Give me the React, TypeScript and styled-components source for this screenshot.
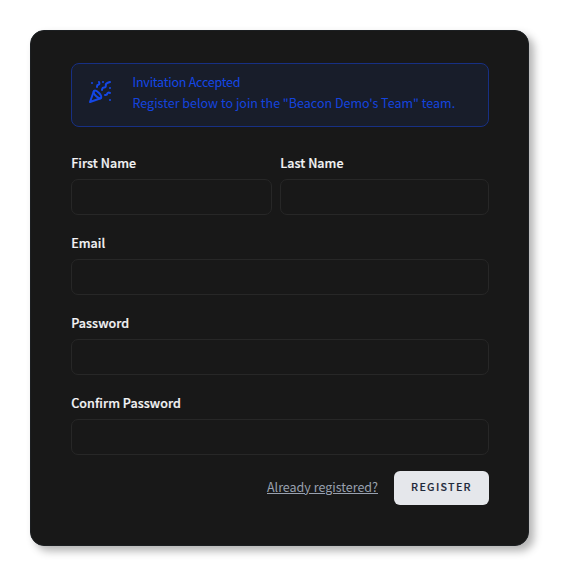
import React from "react";
import styled, { createGlobalStyle } from "styled-components";
import { PartyPopper } from "lucide-react";

const GlobalStyle = createGlobalStyle`
  *, *::before, *::after { box-sizing: border-box; }
  body {
    margin: 0;
    background: #fff;
    font-family: "Noto Sans CJK SC", "Noto Sans", sans-serif;
    font-size: 12.5px;
    line-height: 20px;
  }
`;

const Page = styled.main`
  padding: 30px;
`;

const Card = styled.form`
  width: 499px;
  height: 516px;
  padding: 32px 39px 0 40px;
  border: 1px solid #1c1f22;
  border-radius: 14px;
  background: #181818;
  box-shadow: 5px 5px 8px rgba(0, 0, 0, 0.3);
`;

const Alert = styled.section`
  display: flex;
  height: 64px;
  padding: 8px 16px;
  border: 1px solid #173084;
  border-radius: 8px;
  background: #181d2a;
  color: #1447e6;
`;

const AlertIcon = styled(PartyPopper)`
  flex: none;
  margin: 8px 20.5px 0 0;
`;

const AlertTitle = styled.div`
  height: 21px;
  letter-spacing: -0.22px;
`;

const AlertText = styled.div`
  opacity: 0.95;
  letter-spacing: 0.01px;
  white-space: nowrap;
`;

const Fields = styled.div`
  display: grid;
  grid-template-columns: 201px 209px;
  column-gap: 8px;
  row-gap: 18px;
  margin-top: 26px;
`;

const Field = styled.label<{ $wide?: boolean }>`
  display: block;
  grid-column: ${({ $wide }) => ($wide ? "1 / -1" : "auto")};
  color: #f3f4f6;
  font-weight: 500;
  letter-spacing: 0.06px;
  text-indent: 0.2px;
  -webkit-text-stroke: 0.2px #f3f4f6;
`;

const Input = styled.input`
  display: block;
  width: 100%;
  height: 36px;
  margin-top: 6px;
  padding: 0 12px;
  border: 1px solid #272727;
  border-radius: 7px;
  outline: none;
  background: #181818;
  color: #f3f4f6;
  font: inherit;
`;

const Actions = styled.footer`
  display: flex;
  align-items: center;
  justify-content: flex-end;
  gap: 16px;
  margin-top: 16px;
`;

const LoginLink = styled.a`
  margin-bottom: 2px;
  color: #99a1af;
  text-decoration: underline;
`;

const Submit = styled.button`
  width: 95px;
  height: 34px;
  padding: 0 0 2px;
  border: 0;
  border-radius: 6px;
  background: #e5e7eb;
  color: #1e2939;
  font: 500 10.7px/16px "Noto Sans CJK SC", "Noto Sans", sans-serif;
  letter-spacing: 1.3px;
  -webkit-text-stroke: 0.15px #1e2939;
  text-transform: uppercase;
`;

export default function App() {
  return (
    <>
      <GlobalStyle />
      <Page>
        <Card>
          <Alert>
            <AlertIcon size={24} strokeWidth={2} />
            <div>
              <AlertTitle>Invitation Accepted</AlertTitle>
              <AlertText>Register below to join the "Beacon Demo's Team" team.</AlertText>
            </div>
          </Alert>
          <Fields>
            <Field>First Name<Input type="text" /></Field>
            <Field>Last Name<Input type="text" /></Field>
            <Field $wide>Email<Input type="email" /></Field>
            <Field $wide>Password<Input type="password" /></Field>
            <Field $wide>Confirm Password<Input type="password" /></Field>
          </Fields>
          <Actions>
            <LoginLink href="#">Already registered?</LoginLink>
            <Submit type="button">Register</Submit>
          </Actions>
        </Card>
      </Page>
    </>
  );
}
